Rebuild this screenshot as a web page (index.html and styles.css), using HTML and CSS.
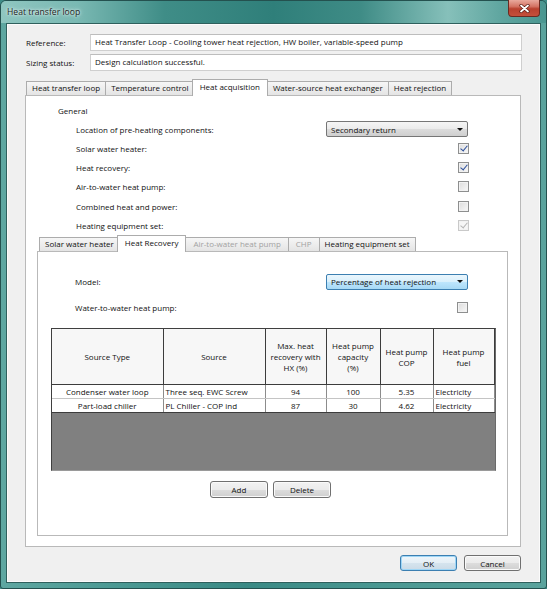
FILE: index.html
```html
<!DOCTYPE html>
<html lang="en">
<head>
    <meta charset="UTF-8">
    <title>Heat transfer loop</title>
    <link rel="stylesheet" href="styles.css">
</head>
<body>
    <div class="window">
        <div class="titlebar">
            <span class="title">Heat transfer loop</span>
            <span class="close-btn">
                <svg width="11" height="9" viewBox="0 0 11 9">
                    <path d="M2 1.5 L9 7.5 M9 1.5 L2 7.5" stroke="#5a1a12" stroke-width="3.2" stroke-linecap="round"/>
                    <path d="M2 1.5 L9 7.5 M9 1.5 L2 7.5" stroke="#ffffff" stroke-width="1.8" stroke-linecap="round"/>
                </svg>
            </span>
        </div>

        <div class="client">
            <div class="field-row">
                <span class="field-label">Reference:</span>
                <div class="textbox">Heat Transfer Loop - Cooling tower heat rejection, HW boiler, variable-speed pump</div>
            </div>
            <div class="field-row">
                <span class="field-label">Sizing status:</span>
                <div class="textbox">Design calculation successful.</div>
            </div>

            <div class="tabs main-tabs">
                <div class="tab-strip">
                    <span class="tab">Heat transfer loop</span>
                    <span class="tab">Temperature control</span>
                    <span class="tab selected">Heat acquisition</span>
                    <span class="tab">Water-source heat exchanger</span>
                    <span class="tab">Heat rejection</span>
                </div>
                <div class="tab-panel">
                    <div class="group-title">General</div>
                    <div class="prop-row">
                        <span>Location of pre-heating components:</span>
                        <div class="combo">Secondary return <span class="arrow"></span></div>
                    </div>
                    <div class="prop-row">
                        <span>Solar water heater:</span>
                        <span class="checkbox checked"></span>
                    </div>
                    <div class="prop-row">
                        <span>Heat recovery:</span>
                        <span class="checkbox checked"></span>
                    </div>
                    <div class="prop-row">
                        <span>Air-to-water heat pump:</span>
                        <span class="checkbox"></span>
                    </div>
                    <div class="prop-row">
                        <span>Combined heat and power:</span>
                        <span class="checkbox"></span>
                    </div>
                    <div class="prop-row">
                        <span>Heating equipment set:</span>
                        <span class="checkbox checked disabled"></span>
                    </div>

                    <div class="tabs sub-tabs">
                        <div class="tab-strip">
                            <span class="tab">Solar water heater</span>
                            <span class="tab selected">Heat Recovery</span>
                            <span class="tab disabled">Air-to-water heat pump</span>
                            <span class="tab disabled">CHP</span>
                            <span class="tab">Heating equipment set</span>
                        </div>
                        <div class="tab-panel">
                            <div class="prop-row model-row">
                                <span>Model:</span>
                                <div class="combo focused">Percentage of heat rejection <span class="arrow"></span></div>
                            </div>
                            <div class="prop-row model-row">
                                <span>Water-to-water heat pump:</span>
                                <span class="checkbox"></span>
                            </div>

                            <div class="grid">
                                <table>
                                    <colgroup>
                                        <col style="width:111px">
                                        <col style="width:102px">
                                        <col style="width:61px">
                                        <col style="width:54px">
                                        <col style="width:53px">
                                        <col style="width:61px">
                                    </colgroup>
                                    <tr>
                                        <th>Source Type</th>
                                        <th>Source</th>
                                        <th>Max. heat<br>recovery with<br>HX (%)</th>
                                        <th>Heat pump<br>capacity<br>(%)</th>
                                        <th>Heat pump<br>COP</th>
                                        <th>Heat pump<br>fuel</th>
                                    </tr>
                                    <tr>
                                        <td class="center">Condenser water loop</td>
                                        <td>Three seq. EWC Screw</td>
                                        <td class="center">94</td>
                                        <td class="center">100</td>
                                        <td class="center">5.35</td>
                                        <td>Electricity</td>
                                    </tr>
                                    <tr class="last">
                                        <td class="center">Part-load chiller</td>
                                        <td>PL Chiller - COP ind</td>
                                        <td class="center">87</td>
                                        <td class="center">30</td>
                                        <td class="center">4.62</td>
                                        <td>Electricity</td>
                                    </tr>
                                </table>
                            </div>

                            <div class="grid-buttons">
                                <span class="button">Add</span>
                                <span class="button">Delete</span>
                            </div>
                        </div>
                    </div>
                </div>
            </div>

            <div class="dialog-buttons">
                <span class="button default">OK</span>
                <span class="button">Cancel</span>
            </div>
        </div>
    </div>
</body>
</html>
```

FILE: styles.css
```css
* {
    box-sizing: border-box;
}

body {
    margin: 0;
    padding: 0;
    font-family: "Open Sans", "Noto Sans", sans-serif;
    font-size: 8px;
    color: #111;
    background: #3f8c87;
}

.window {
    width: 547px;
    height: 589px;
    display: flex;
    flex-direction: column;
    border: 1px solid #24514f;
    border-radius: 6px 6px 3px 3px;
    background: linear-gradient(90deg, #5ea7a1 0%, #4c9a94 20%, #3a8a85 45%, #4a9892 70%, #5aa39d 100%);
}

.titlebar {
    height: 22px;
    display: flex;
    align-items: flex-start;
    padding: 0 6px 0 6px;
    border-radius: 5px 5px 0 0;
    background: linear-gradient(90deg, #8fc6c0 0%, #7ab9b3 14%, #3f8d87 30%, #2f7f7a 50%, #3f8c86 66%, #86c0ba 82%, #5ea59f 92%, #4a9690 100%);
}

.title {
    padding-top: 5px;
    font-size: 8.6px;
    color: #1c1c1c;
    text-shadow: 0 0 4px #e8f6f4, 0 0 2px #e8f6f4;
}

.close-btn {
    margin-left: auto;
    width: 32px;
    height: 17px;
    margin-top: -1px;
    display: flex;
    align-items: center;
    justify-content: center;
    border: 1px solid #6b2a21;
    border-top: none;
    border-radius: 0 0 4px 4px;
    background: linear-gradient(#e9a99d 0%, #d47464 40%, #b9412f 55%, #c4503b 100%);
}

.client {
    flex: 1;
    margin: 0 5px 5px 5px;
    padding: 10px 19px 11px 18px;
    display: flex;
    flex-direction: column;
    background: #f0f0f0;
    border: 1px solid #2f605d;
    box-shadow: inset 0 0 0 1px #fbfbfb;
}

.field-row {
    display: flex;
    align-items: center;
    height: 17px;
    margin-bottom: 3px;
}

.field-label {
    width: 65px;
    padding-left: 1px;
    flex-shrink: 0;
}

.textbox {
    flex: 1;
    height: 17px;
    margin-right: -1px;
    padding: 0 4px;
    line-height: 14px;
    background: #fff;
    border: 1px solid #cfcfcf;
    border-top-color: #bdbdbd;
    white-space: nowrap;
}

/* tabs */

.tabs {
    display: flex;
    flex-direction: column;
}

.main-tabs {
    flex: 1;
    margin-top: 5px;
}

.tab-strip {
    display: flex;
    align-items: flex-end;
    height: 16px;
    padding-left: 1px;
}

.sub-tabs .tab-strip {
    padding-left: 2px;
}

.tab {
    height: 14px;
    padding: 0 5px;
    margin-right: -1px;
    line-height: 12px;
    white-space: nowrap;
    border: 1px solid #acacac;
    border-bottom: none;
    background: linear-gradient(#f6f6f6, #e4e4e4);
}

.tab.selected {
    position: relative;
    z-index: 1;
    height: 17px;
    margin: 0 -1px -1px -2px;
    padding: 0 7px;
    line-height: 13px;
    background: #fff;
}

.tab.disabled {
    padding: 0 7px;
    color: #a2a2a2;
}

.tab-panel {
    flex: 1;
    display: flex;
    flex-direction: column;
    background: #fff;
    border: 1px solid #b9b9b9;
}

.main-tabs > .tab-panel {
    padding-top: 4.5px;
}

.group-title {
    height: 19.2px;
    line-height: 19.2px;
    padding-left: 32px;
}

.prop-row {
    display: flex;
    align-items: center;
    justify-content: space-between;
    height: 19.2px;
    padding: 0 51px 0 50px;
}

.combo {
    width: 142px;
    height: 16px;
    margin-right: 1px;
    padding: 0 4px;
    display: flex;
    align-items: center;
    border: 1px solid #767676;
    border-radius: 2px;
    background: linear-gradient(#f5f5f5 0%, #ebebeb 50%, #dcdcdc 51%, #cfcfcf 100%);
}

.combo.focused {
    border-color: #3c7fb1;
    background: linear-gradient(#eaf6fd 0%, #d9f0fc 50%, #bee6fd 51%, #a7d9f5 100%);
}

.arrow {
    margin-left: auto;
    width: 0;
    height: 0;
    border-left: 3px solid transparent;
    border-right: 3px solid transparent;
    border-top: 3px solid #111;
}

.checkbox {
    width: 11px;
    height: 11px;
    position: relative;
    border: 1px solid #8e8f8f;
    background: linear-gradient(135deg, #dcdcdc, #f8f8f8);
    box-shadow: inset 0 0 0 1px #f2f2f2;
}

.checkbox.checked::after {
    content: "";
    position: absolute;
    left: 3px;
    top: 0px;
    width: 3px;
    height: 6px;
    border: solid #2b4e9a;
    border-width: 0 1.5px 1.5px 0;
    transform: rotate(40deg);
}

.checkbox.disabled {
    border-color: #c9c9c9;
    background: #f6f6f6;
}

.checkbox.disabled::after {
    border-color: #b5b5b5;
}

.sub-tabs {
    flex: 1;
    margin: 0 12px 10px 11px;
}

.sub-tabs .tab-panel {
    padding: 22px 0 0 0;
}

.model-row {
    height: 16px;
    padding: 0 38px 0 37px;
    margin-bottom: 10px;
}

.model-row:nth-child(2) {
    margin-bottom: 12px;
}

.model-row .checkbox {
    margin-right: 1px;
}

/* data grid */

.grid {
    width: 445px;
    height: 143px;
    margin-left: 13px;
    background: #808080;
    border: 1px solid #3f3f3f;
    border-right-color: #6a6a6a;
    border-bottom-color: #9a9a9a;
}

.grid table {
    width: 442px;
    table-layout: fixed;
    border-collapse: collapse;
}

.grid th {
    height: 56px;
    padding: 0 1px;
    font-weight: normal;
    line-height: 11px;
    text-align: center;
    background: #f7f7f7;
    border: 1px solid #3c3c3c;
    border-top: none;
}

.grid th:first-child,
.grid td:first-child {
    border-left: none;
}

.grid td {
    height: 14px;
    padding: 0 2px;
    line-height: 12px;
    white-space: nowrap;
    overflow: hidden;
    background: #fff;
    border-right: 1px solid #8c8c8c;
    border-bottom: 1px solid #c4c4c4;
}

.grid td.center {
    text-align: center;
}

.grid tr.last td {
    border-bottom: 1px solid #3c3c3c;
}

/* buttons */

.button {
    height: 17px;
    display: flex;
    align-items: center;
    justify-content: center;
    border: 1px solid #707070;
    border-radius: 3px;
    background: linear-gradient(#f2f2f2 0%, #ebebeb 50%, #dddddd 51%, #cfcfcf 100%);
    box-shadow: inset 0 0 0 1px #fafafa;
}

.grid-buttons {
    display: flex;
    gap: 5px;
    margin: 10px 0 0 172px;
}

.grid-buttons .button {
    width: 58px;
}

.dialog-buttons {
    display: flex;
    justify-content: flex-end;
    gap: 7px;
    margin-top: 8px;
}

.dialog-buttons .button {
    width: 57px;
    height: 16px;
}

.button.default {
    border-color: #3c7fb1;
    box-shadow: inset 0 0 0 1px #9ed6f6;
    background: linear-gradient(#eef6fb 0%, #e4eef5 50%, #d5e4ee 51%, #cbdbe7 100%);
}
```
